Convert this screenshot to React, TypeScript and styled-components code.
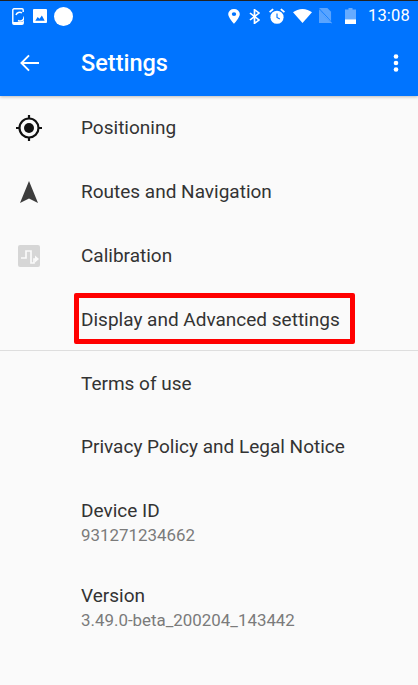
import React from "react";
import styled, { createGlobalStyle } from "styled-components";

const Global = createGlobalStyle`
  html, body { margin: 0; padding: 0; background: #fafafa; }
  body { font-family: Roboto, "Noto Sans", sans-serif; }
`;

const Screen = styled.div`
  width: 418px;
  height: 685px;
  overflow: hidden;
  background: #fafafa;
  display: flex;
  flex-direction: column;
`;

const Header = styled.header`
  background: #0074ff;
  height: 96px;
  flex: none;
  display: flex;
  flex-direction: column;
  border-top: 1px solid #222;
  box-sizing: border-box;
  box-shadow: 0 1px 3px rgba(0, 0, 0, 0.25);
  position: relative;
  z-index: 1;
`;

const StatusBar = styled.div`
  height: 30px;
  display: flex;
  align-items: center;
  justify-content: space-between;
  padding: 0 8px 0 12px;
  color: #fff;
`;

const StatusGroup = styled.div`
  display: flex;
  align-items: center;
`;

const StatusSlot = styled.span<{ $gap: number }>`
  display: flex;
  margin-right: ${(p) => p.$gap}px;
`;

const Clock = styled.span`
  font-size: 16.5px;
  line-height: 30px;
  letter-spacing: 0.2px;
`;

const Toolbar = styled.div`
  flex: 1;
  display: flex;
  align-items: center;
  padding: 0 19px 2px 20px;
`;

const Title = styled.h1`
  flex: 1;
  margin: 0 0 0 42px;
  font-size: 23.5px;
  font-weight: 500;
  color: #fff;
`;

const List = styled.div`
  flex: 1;
  display: flex;
  flex-direction: column;
  padding-top: 0.65px;
`;

const Row = styled.div`
  height: 63.7px;
  flex: none;
  display: grid;
  grid-template-columns: 81px 1fr;
  align-items: center;
`;

const IconCell = styled.div`
  display: flex;
  justify-content: flex-start;
  padding-left: 16px;
`;

const Label = styled.div`
  font-size: 19px;
  color: #333;
  line-height: 24px;
`;

const Divider = styled.div`
  height: 1px;
  background: #dedede;
  flex: none;
  margin: -1px 0 0.35px;
`;

const InfoRow = styled.div`
  height: 85px;
  flex: none;
  padding-left: 81px;
  display: flex;
  flex-direction: column;
  justify-content: center;
`;

const InfoList = styled.div`
  display: flex;
  flex-direction: column;
  padding-top: 1.5px;
`;

const Sub = styled.div`
  font-size: 16.9px;
  line-height: 24px;
  color: #7b7b7b;
`;

const Highlight = styled.div`
  position: absolute;
  left: 74px;
  top: 293px;
  width: 281px;
  height: 51px;
  box-sizing: border-box;
  border: 5px solid #ff0000;
  border-radius: 2px;
  z-index: 2;
`;

const PhoneIcon = () => (
  <svg width="12" height="17" viewBox="0 0 12 17">
    <path fill="none" stroke="#fff" strokeWidth="1.400" d="M2 .8h8A1.200 1.200 0 0 1 11.200 2v2M11.200 12.500V15a1.200 1.200 0 0 1-1.200 1.200H2A1.200 1.200 0 0 1 .8 15V2A1.200 1.200 0 0 1 2 .8" />
    <path fill="none" stroke="#fff" strokeWidth="1.500" d="M4 7a4 4 0 0 1 6-2M12 8.500a4 4 0 0 1-6 4" />
    <path fill="#fff" d="M.8 14h10.400v2H.8z" />
  </svg>
);

const ImageIcon = () => (
  <svg width="14" height="14" viewBox="0 0 15 15">
    <path fill="#fff" fillRule="evenodd" d="M1 0h13a1 1 0 0 1 1 1v13a1 1 0 0 1-1 1H1a1 1 0 0 1-1-1V1a1 1 0 0 1 1-1zM2.500 12.500h10L9.500 7l-2.500 3.500L5 8.500z" />
  </svg>
);

const Circle = () => (
  <svg width="19" height="19" viewBox="0 0 19 19">
    <circle cx="9.500" cy="9.500" r="9.500" fill="#fff" />
  </svg>
);

const PinIcon = () => (
  <svg width="12" height="15" viewBox="0 0 12 17" preserveAspectRatio="none">
    <path fill="#fff" fillRule="evenodd" d="M6 0a5.800 5.800 0 0 1 5.800 5.800C11.800 10 6 17 6 17S.2 10 .2 5.800A5.800 5.800 0 0 1 6 0zm0 3.600a2.200 2.200 0 1 0 0 4.400 2.200 2.200 0 0 0 0-4.400z" />
  </svg>
);

const BluetoothIcon = () => (
  <svg width="11" height="15" viewBox="0 0 11 17" preserveAspectRatio="none">
    <path fill="none" stroke="#fff" strokeWidth="1.700" d="M1 4.500l9 8-4.500 3.800V.8L10 4.500l-9 8" />
  </svg>
);

const AlarmIcon = () => (
  <svg width="16" height="16" viewBox="0 0 17 17">
    <circle cx="8.500" cy="9.800" r="7" fill="#fff" />
    <path fill="none" stroke="#0074ff" strokeWidth="1.200" d="M8.500 5.800v4.200l3 1.700" />
    <path fill="none" stroke="#fff" strokeWidth="2" d="M.6 4.400L4.400 1.200M16.400 4.400L12.600 1.200" />
  </svg>
);

const WifiIcon = () => (
  <svg width="19" height="14" viewBox="0 0 20 15" preserveAspectRatio="none">
    <path fill="#fff" d="M10 15L0 3.600C2.800 1.400 6.200 0 10 0s7.200 1.400 10 3.600z" />
  </svg>
);

const SimIcon = () => (
  <svg width="13" height="16" viewBox="0 0 14 17" preserveAspectRatio="none">
    <path fill="#fff" fillOpacity="0.35" d="M0 0h9l4 4v12H0z" />
    <path stroke="#0074ff" strokeWidth="1.500" d="M-1 0l14 15" />
    <path stroke="#fff" strokeOpacity="0.4" strokeWidth="1" d="M0 1.500l14 15" />
  </svg>
);

const BatteryIcon = () => (
  <svg width="11" height="16" viewBox="0 0 11 17" preserveAspectRatio="none">
    <path fill="#fff" fillOpacity="0.4" d="M3.500 0h4v1.500H11V12H0V1.500h3.500z" />
    <path fill="#fff" d="M0 12h11v5H0z" />
  </svg>
);

const BackIcon = () => (
  <svg width="19" height="18" viewBox="0 0 20 18">
    <path fill="none" stroke="#fff" strokeWidth="2" d="M20 9H2M9.500 1L1.500 9l8 8" />
  </svg>
);

const MoreIcon = () => (
  <svg width="6" height="18" viewBox="0 0 6 18">
    <circle cx="3" cy="2.500" r="2.300" fill="#fff" />
    <circle cx="3" cy="9" r="2.300" fill="#fff" />
    <circle cx="3" cy="15.500" r="2.300" fill="#fff" />
  </svg>
);

const TargetIcon = () => (
  <svg width="26" height="26" viewBox="0 0 26 26">
    <circle cx="13" cy="13" r="9.500" fill="none" stroke="#111" strokeWidth="2.200" />
    <circle cx="13" cy="13" r="5" fill="#111" />
    <path stroke="#111" strokeWidth="2.200" d="M13 0v4M13 22v4M0 13h4M22 13h4" />
  </svg>
);

const ArrowIcon = styled((props: { className?: string }) => (
  <svg className={props.className} width="18" height="22" viewBox="0 0 18 22">
    <path fill="#3d3d3d" d="M9 0l9 22-9-4.500L0 22z" />
  </svg>
))`
  margin-left: 4px;
`;

const CalibrationIcon = styled((props: { className?: string }) => (
  <svg className={props.className} width="22" height="22" viewBox="0 0 22 22">
    <rect width="22" height="22" rx="2" fill="#d6d6d6" />
    <path fill="none" stroke="#fafafa" strokeWidth="1.700" d="M3 13h5V6h5v12h3v-4h2" />
    <path fill="#fafafa" d="M17 10.500l4 3.500-4 3.500z" />
  </svg>
))`
  margin-left: 2px;
`;

export default function App() {
  return (
    <Screen>
      <Global />
      <Header>
        <StatusBar>
          <StatusGroup>
            <StatusSlot $gap={9}><PhoneIcon /></StatusSlot>
            <StatusSlot $gap={7}><ImageIcon /></StatusSlot>
            <Circle />
          </StatusGroup>
          <StatusGroup>
            <StatusSlot $gap={9}><PinIcon /></StatusSlot>
            <StatusSlot $gap={9}><BluetoothIcon /></StatusSlot>
            <StatusSlot $gap={8}><AlarmIcon /></StatusSlot>
            <StatusSlot $gap={7}><WifiIcon /></StatusSlot>
            <StatusSlot $gap={13}><SimIcon /></StatusSlot>
            <StatusSlot $gap={12}><BatteryIcon /></StatusSlot>
            <Clock>13:08</Clock>
          </StatusGroup>
        </StatusBar>
        <Toolbar>
          <BackIcon />
          <Title>Settings</Title>
          <MoreIcon />
        </Toolbar>
      </Header>
      <List>
        <Row>
          <IconCell><TargetIcon /></IconCell>
          <Label>Positioning</Label>
        </Row>
        <Row>
          <IconCell><ArrowIcon /></IconCell>
          <Label>Routes and Navigation</Label>
        </Row>
        <Row>
          <IconCell><CalibrationIcon /></IconCell>
          <Label>Calibration</Label>
        </Row>
        <Row>
          <IconCell />
          <Label>Display and Advanced settings</Label>
        </Row>
        <Divider />
        <Row>
          <IconCell />
          <Label>Terms of use</Label>
        </Row>
        <Row>
          <IconCell />
          <Label>Privacy Policy and Legal Notice</Label>
        </Row>
        <InfoList>
          <InfoRow>
            <Label>Device ID</Label>
            <Sub>931271234662</Sub>
          </InfoRow>
          <InfoRow>
            <Label>Version</Label>
            <Sub>3.49.0-beta_200204_143442</Sub>
          </InfoRow>
        </InfoList>
      </List>
      <Highlight />
    </Screen>
  );
}
